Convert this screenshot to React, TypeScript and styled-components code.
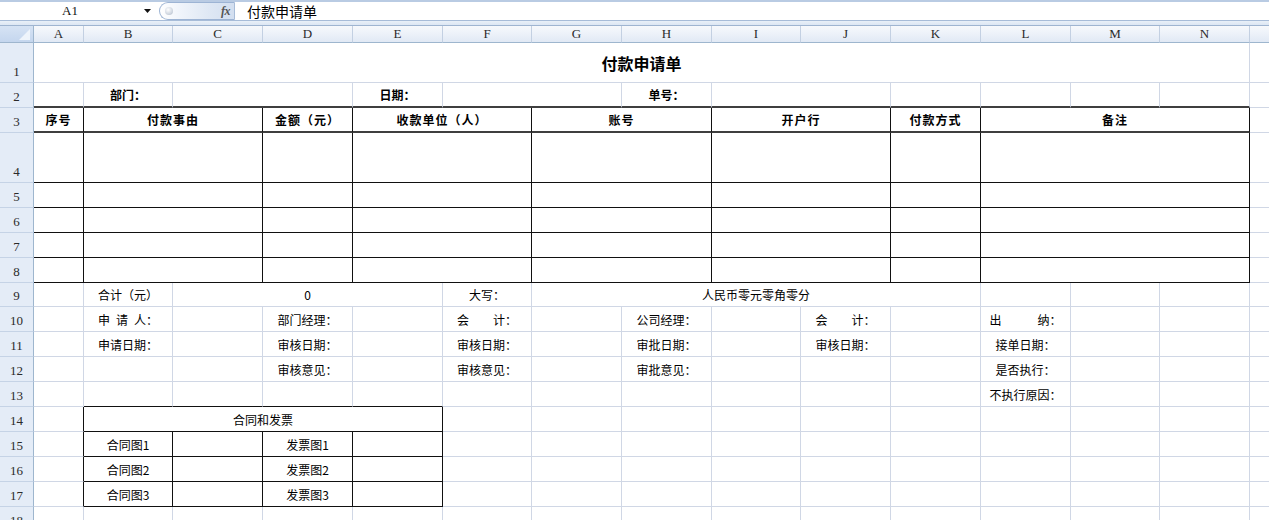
import React from 'react';
import styled, { createGlobalStyle, css } from 'styled-components';

const GlobalStyle = createGlobalStyle`
  html, body { margin: 0; padding: 0; background: #ffffff; overflow: hidden; }
  #root { width: 1269px; height: 520px; overflow: hidden; }
`;

const COLS = [50, 89, 90, 90, 90, 89, 90, 90, 89, 90, 90, 90, 89, 90, 90];
const LETTERS = 'ABCDEFGHIJKLMN'.split('').concat(['']);
const ROWS = [40, 25, 25, 50, 25, 25, 25, 25, 24, 25, 25, 25, 25, 25, 25, 25, 25, 25];

type Edge = 'g' | 'k' | 'K';
type Variant = 'plain' | 'label' | 'head' | 'title';

interface Seg {
  span?: number;
  text?: string;
  v?: Variant;
  r?: Edge;
  b?: Edge;
}

const edge = (e: Edge) =>
  e === 'K' ? '2px solid #3f3f3f' : e === 'k' ? '1px solid #111111' : '1px solid #d0d7e5';

/* ---------- window chrome ---------- */

const Window = styled.div`
  width: 1269px;
  height: 520px;
  overflow: hidden;
  display: flex;
  flex-direction: column;
  background: #ffffff;
`;

const FormulaBar = styled.div`
  height: 21px;
  box-sizing: border-box;
  border-top: 2px solid #b9cbe3;
  border-bottom: 1px solid #a7bcd8;
  display: flex;
  align-items: stretch;
  background: #ffffff;
  flex: none;
`;

const NameBox = styled.div`
  width: 159px;
  display: flex;
  align-items: center;
  flex: none;
`;

const NameText = styled.span`
  width: 140px;
  text-align: center;
  font-family: "Liberation Serif", serif;
  font-size: 13px;
  color: #111;
`;

const DropArrow = styled.svg`
  margin-left: 4px;
  width: 7px;
  height: 4px;
`;

const FxPill = styled.div`
  width: 76px;
  box-sizing: border-box;
  margin: 0;
  border: 1px solid #9db4d4;
  border-right: 1px solid #a9bdd8;
  border-radius: 10px 0 0 10px;
  background: linear-gradient(90deg, #ffffff 0%, #f1f5fb 25%, #dfe8f4 65%, #d3dff0 100%);
  display: flex;
  align-items: center;
  justify-content: space-between;
  padding: 0 4px 0 5px;
  flex: none;
`;

const ExpandDot = styled.span`
  width: 8px;
  height: 8px;
  border-radius: 50%;
  background: radial-gradient(circle at 40% 35%, #ffffff 0%, #d0d7e1 60%, #aab4c3 100%);
`;

const FxLabel = styled.span`
  font-family: "Liberation Serif", serif;
  font-style: italic;
  font-weight: bold;
  font-size: 12px;
  color: #555;
  letter-spacing: -0.5px;
`;

const FormulaText = styled.div`
  padding-left: 12px;
  display: flex;
  align-items: center;
  font-family: "Noto Sans CJK SC", "Liberation Sans", sans-serif;
  font-size: 14px;
  color: #000;
`;

const Band = styled.div`
  height: 5px;
  box-sizing: border-box;
  background: linear-gradient(180deg, #e9f0f8, #dce6f3);
  border-bottom: 1px solid #9fb5d1;
  flex: none;
`;

/* ---------- sheet grid ---------- */

const Sheet = styled.div`
  display: grid;
  grid-template-columns: 34px ${COLS.map((c) => `${c}px`).join(' ')};
  grid-template-rows: 17px ${ROWS.map((r) => `${r}px`).join(' ')};
  flex: none;
`;

const Corner = styled.div`
  box-sizing: border-box;
  position: relative;
  background: linear-gradient(180deg, #d6e3f4, #c4d6ee);
  border-right: 1px solid #9eb6ce;
  border-bottom: 1px solid #9eb6ce;
  &::after {
    content: '';
    position: absolute;
    right: 3px;
    bottom: 2px;
    width: 0;
    height: 0;
    border-left: 11px solid transparent;
    border-bottom: 11px solid #eef4fb;
  }
`;

const ColHead = styled.div`
  box-sizing: border-box;
  background: linear-gradient(180deg, #f7f9fc 0%, #edf2f9 45%, #e1e9f5 100%);
  border-right: 1px solid #c3d0e2;
  border-bottom: 1px solid #9eb6ce;
  display: flex;
  align-items: center;
  justify-content: center;
  font-family: "Liberation Serif", serif;
  font-size: 13px;
  color: #2a2a2a;
`;

const RowHead = styled.div`
  box-sizing: border-box;
  background: #e4ecf7;
  border-right: 1px solid #9eb6ce;
  border-bottom: 1px solid #c5d3e6;
  display: flex;
  align-items: flex-end;
  justify-content: center;
  padding-bottom: 2px;
  font-family: "Liberation Serif", serif;
  font-size: 13px;
  color: #2a2a2a;
`;

const variants = {
  plain: css`
    font-size: 12px;
    font-weight: 400;
  `,
  label: css`
    font-size: 12px;
    font-weight: 700;
  `,
  head: css`
    font-size: 12px;
    font-weight: 700;
    letter-spacing: 1px;
  `,
  title: css`
    font-size: 16px;
    font-weight: 700;
  `,
};

const Cell = styled.div<{ $span: number; $r: Edge; $b: Edge; $v: Variant }>`
  grid-column: span ${(p) => p.$span};
  box-sizing: border-box;
  border-right: ${(p) => edge(p.$r)};
  border-bottom: ${(p) => edge(p.$b)};
  display: flex;
  align-items: center;
  justify-content: center;
  white-space: pre;
  overflow: hidden;
  font-family: "Noto Sans CJK SC", "Liberation Sans", sans-serif;
  color: #000;
  ${(p) => variants[p.$v]}
`;

/* ---------- sheet data ---------- */

const blanks = (n: number, extra: Seg = {}): Seg[] => Array.from({ length: n }, () => ({ ...extra }));

const tableSpans = [1, 2, 1, 2, 2, 2, 1, 3];
const headTexts = ['序号', '付款事由', '金额（元）', '收款单位（人）', '账号', '开户行', '付款方式', '备注'];

const headRow: Seg[] = [
  ...tableSpans.map((s, i) => ({ span: s, text: headTexts[i], v: 'head' as Variant, r: 'k' as Edge, b: 'K' as Edge })),
  {},
];
const bodyRow: Seg[] = [...tableSpans.map((s) => ({ span: s, r: 'k' as Edge, b: 'k' as Edge })), {}];

const boxRow = (a: string, b: string): Seg[] => [
  { r: 'k' },
  { text: a, r: 'k', b: 'k' },
  { r: 'k', b: 'k' },
  { text: b, r: 'k', b: 'k' },
  { r: 'k', b: 'k' },
  ...blanks(10),
];

const SHEET: Seg[][] = [
  [{ span: 14, text: '付款申请单', v: 'title' }, {}],
  [
    { b: 'K' },
    { text: '部门：', v: 'label', b: 'K' },
    { span: 2, b: 'K' },
    { text: '日期：', v: 'label', b: 'K' },
    { span: 2, b: 'K' },
    { text: '单号：', v: 'label', b: 'K' },
    { span: 2, b: 'K' },
    ...blanks(4, { b: 'K' }),
    {},
  ],
  headRow,
  bodyRow,
  bodyRow,
  bodyRow,
  bodyRow,
  bodyRow,
  [
    {},
    { text: '合计（元）' },
    { span: 3, text: '0' },
    { text: '大写：' },
    { span: 5, text: '人民币零元零角零分' },
    ...blanks(4),
  ],
  [
    {},
    { text: '申\u2002请\u2002人：' },
    {},
    { text: '部门经理：' },
    {},
    { text: '会\u3000\u3000计：' },
    {},
    { text: '公司经理：' },
    {},
    { text: '会\u3000\u3000计：' },
    {},
    { text: '出\u3000\u3000\u3000纳：' },
    ...blanks(3),
  ],
  [
    {},
    { text: '申请日期：' },
    {},
    { text: '审核日期：' },
    {},
    { text: '审核日期：' },
    {},
    { text: '审批日期：' },
    {},
    { text: '审核日期：' },
    {},
    { text: '接单日期：' },
    ...blanks(3),
  ],
  [
    ...blanks(3),
    { text: '审核意见：' },
    {},
    { text: '审核意见：' },
    {},
    { text: '审批意见：' },
    ...blanks(3),
    { text: '是否执行：' },
    ...blanks(3),
  ],
  [{}, ...blanks(4, { b: 'k' }), ...blanks(6), { text: '不执行原因：' }, ...blanks(3)],
  [{ r: 'k' }, { span: 4, text: '合同和发票', r: 'k', b: 'k' }, ...blanks(10)],
  boxRow('合同图1', '发票图1'),
  boxRow('合同图2', '发票图2'),
  boxRow('合同图3', '发票图3'),
  blanks(15),
];

export default function App() {
  return (
    <Window>
      <GlobalStyle />
      <FormulaBar>
        <NameBox>
          <NameText>A1</NameText>
          <DropArrow viewBox="0 0 7 4">
            <path d="M0 0 L7 0 L3.5 4 Z" fill="#111" />
          </DropArrow>
        </NameBox>
        <FxPill>
          <ExpandDot />
          <FxLabel>fx</FxLabel>
        </FxPill>
        <FormulaText>付款申请单</FormulaText>
      </FormulaBar>
      <Band />
      <Sheet>
        <Corner />
        {LETTERS.map((l, i) => (
          <ColHead key={i}>{l}</ColHead>
        ))}
        {SHEET.map((row, ri) => (
          <React.Fragment key={ri}>
            <RowHead>{ri + 1}</RowHead>
            {row.map((seg, ci) => (
              <Cell
                key={ci}
                $span={seg.span ?? 1}
                $r={seg.r ?? 'g'}
                $b={seg.b ?? 'g'}
                $v={seg.v ?? 'plain'}
              >
                {seg.text ?? ''}
              </Cell>
            ))}
          </React.Fragment>
        ))}
      </Sheet>
    </Window>
  );
}
